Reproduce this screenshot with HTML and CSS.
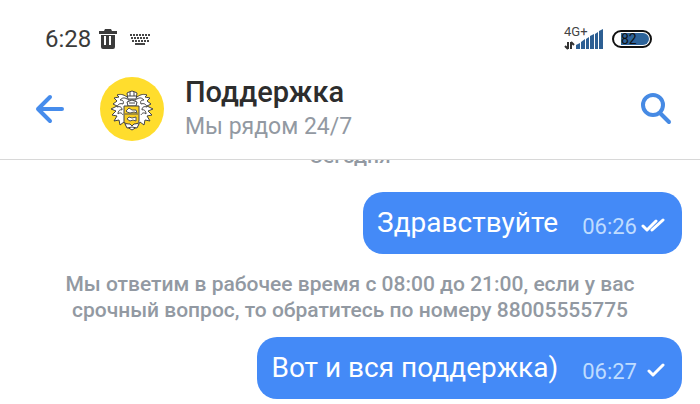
FILE: index.html
```html
<!DOCTYPE html>
<html lang="ru">
<head>
<meta charset="utf-8">
<meta name="viewport" content="width=device-width, initial-scale=1">
<title>Поддержка</title>
<link rel="stylesheet" href="styles.css">
</head>
<body>
<div class="screen">
  <div class="status">
    <span class="clock">6:28</span>
    <svg class="trash" width="20" height="20" viewBox="0 0 20 20" aria-hidden="true"><path fill="#3b3b3b" fill-rule="evenodd" d="M1 2h5l1-2h6l1 2h5v3H1zM3 6h14v12a2 2 0 0 1-2 2H5a2 2 0 0 1-2-2zM6 7v9h2V7zM11 7v9h2V7z"/></svg>
    <svg class="keyboard" width="20" height="12" viewBox="0 0 20 12" aria-hidden="true"><g fill="none" stroke="#444" stroke-width="2"><path stroke-dasharray="2 1" d="M0 2h20M1 5h18"/><path stroke-dasharray="2 1" d="M2 8h17"/><path d="M5 11h10"/></g></svg>
    <div class="network">
      <span class="network-type">4G+</span>
      <svg width="40" height="22" viewBox="0 0 40 22" aria-hidden="true"><g fill="none" stroke="#333" stroke-width="2"><path d="M4 14v7M1 18l3 3M7 21v-7M10 17l-3-3"/></g><g fill="#2d5f93"><path d="M12 21v-4l4-2v6zM17 21v-7l4-3v10zM22 21V11l3-2v12zM26 21V8l4-2v15zM31 21V6l3-2v17zM35 21V3l4-2v20z"/></g></svg>
    </div>
    <div class="battery"><span class="battery-level">82</span></div>
  </div>
  <header class="header">
    <button class="icon-button" type="button" aria-label="Назад"><svg width="30" height="30" viewBox="0 0 30 30"><path fill="none" stroke="#468cec" stroke-width="4" stroke-linecap="round" stroke-linejoin="round" d="M27 15H3M15 3L3 15l12 12"/></svg></button>
    <svg class="avatar" width="64" height="64" viewBox="0 0 64 64" aria-hidden="true">
      <circle cx="32" cy="32" r="32" fill="#ffdd2d"/>
      <g fill="#fff" stroke="#444" stroke-width="1" stroke-linejoin="round">
        <path d="M27 20c-4-3-7-3-10-2l2 2-5 1 3 3-4 3 4 2-6 3 5 2-4 4 5 1-3 5 5-1 1 5 4-3 3 5 5 3 5-3 3-5 4 3 1-5 5 1-3-5 5-1-4-4 5-2-6-3 4-2-4-3 3-3-5-1 2-2c-3-1-6-1-10 2l-5 3z"/>
        <path d="M27 22c-3-2-5-1-7 1 3 0 4 1 3 4-3-1-5 0-6 3 3-1 5 0 5 3-2-1-4 1-4 4 2-2 4-1 5 1M37 22c3-2 5-1 7 1-3 0-4 1-3 4 3-1 5 0 6 3-3-1-5 0-5 3 2-1 4 1 4 4-2-2-4-1-5 1"/>
        <path d="M27 16l2-1 3-1 3 1 2 1-1 7h-8zM28 19h8M28 22h8M30 15v4M34 15v4"/>
        <path d="M27 25l5-2 5 2-1 4h-8zM29 26h6"/>
        <path d="M25 47l4-1 3 2 3-2 4 1-2 4-5-1-5 1z"/>
      </g>
      <path d="M24 29h15v15c0 2-2 3-5 3l-2 2-2-2c-4 0-6-1-6-3z" fill="#f9cf22" stroke="#444"/>
      <path d="M25 37h13" stroke="#555"/>
      <path d="M26 34l3-3 3 2h4l1 3-3-1-4 1-3-1zM27 42l2-2 3 1 4-1v4l-3-1-3 1z" fill="#fff" stroke="#555" stroke-width="1"/>
    </svg>
    <div class="contact">
      <h1 class="name">Поддержка</h1>
      <p class="subtitle">Мы рядом 24/7</p>
    </div>
    <button class="icon-button" type="button" aria-label="Поиск"><svg width="32" height="32" viewBox="0 0 32 32"><g fill="none" stroke="#468ae4" stroke-width="4" stroke-linecap="round"><circle cx="13" cy="12" r="10"/><path d="M21 21l8 8"/></g></svg></button>
  </header>
  <main class="chat">
    <p class="notice date">Сегодня</p>
    <div class="bubble">
      <span class="text">Здравствуйте</span>
      <time class="time">06:26</time>
      <svg class="ticks" width="26" height="16" viewBox="0 0 26 16" role="img" aria-label="Прочитано"><path fill="none" stroke="#fff" stroke-width="3" stroke-linecap="round" stroke-linejoin="round" d="M2 8l4 4L15 3M11 12L22 2"/></svg>
    </div>
    <p class="notice">Мы ответим в рабочее время с 08:00 до 21:00, если у вас срочный вопрос, то обратитесь по номеру 88005555775</p>
    <div class="bubble">
      <span class="text">Вот и вся поддержка)</span>
      <time class="time">06:27</time>
      <svg class="ticks" width="26" height="16" viewBox="0 0 26 16" role="img" aria-label="Отправлено"><path fill="none" stroke="#fff" stroke-width="3" stroke-linecap="round" stroke-linejoin="round" d="M8 8l4 4L22 2"/></svg>
    </div>
  </main>
</div>
</body>
</html>
```
FILE: styles.css
```css
* {
  box-sizing: border-box;
}

body {
  margin: 0;
  background: #fff;
  color: #2d2d2d;
  font-family: Roboto, "Liberation Sans", sans-serif;
}

h1,
p {
  margin: 0;
}

.screen {
  display: flex;
  flex-direction: column;
  min-height: 100vh;
}

.status {
  display: flex;
  align-items: center;
  padding: 24px 48px 8px 45px;
}

.clock {
  font-size: 24px;
  line-height: 30px;
  color: #3b3b3b;
}

.trash {
  margin-left: 7px;
}

.keyboard {
  margin-left: 12px;
}

.network {
  position: relative;
  display: flex;
  margin-left: auto;
}

.network-type {
  position: absolute;
  top: -3px;
  left: 0;
  font-size: 13px;
  line-height: 14px;
  color: #444;
}

.battery {
  width: 40px;
  margin-left: 8px;
  padding: 1px;
  border: 2px solid #111;
  border-radius: 9px;
}

.battery-level {
  display: block;
  padding-left: 6px;
  border-radius: 6px;
  background: linear-gradient(to right, #fff 6px, #2d6399 6px);
  color: #111;
  font-size: 14px;
  line-height: 12px;
}

.header {
  display: flex;
  align-items: center;
  padding: 12px 26px 15px 32px;
  border-bottom: 1px solid #d8d8d8;
}

.icon-button {
  display: flex;
  align-items: center;
  justify-content: center;
  width: 36px;
  height: 48px;
  padding: 0;
  border: 0;
  background: none;
}

.avatar {
  margin: 0 21px 0 32px;
}

.contact {
  flex: 1;
}

.name {
  font-size: 29px;
  font-weight: 500;
  line-height: 36px;
}

.subtitle {
  color: #9299a2;
  font-size: 23px;
  line-height: 34px;
}

.chat {
  flex: 1;
  display: flex;
  flex-direction: column;
  align-items: flex-end;
  overflow: hidden;
  padding: 0 18px 5px;
}

.notice {
  align-self: stretch;
  padding: 17px 32px 14px;
  color: #9299a2;
  font-size: 21px;
  font-weight: 500;
  line-height: 26px;
  text-align: center;
}

.date {
  margin-top: -17px;
  padding: 0 0 23px;
}

.bubble {
  display: flex;
  align-items: flex-end;
  padding: 12px 14px;
  border-radius: 20px;
  background: #448af7;
  color: #fff;
}

.text {
  font-size: 28px;
  line-height: 38px;
}

.time {
  margin-left: 24px;
  color: #bfdcff;
  font-size: 22px;
  line-height: 30px;
}

.ticks {
  margin: 0 1px 8px 4px;
}
```
